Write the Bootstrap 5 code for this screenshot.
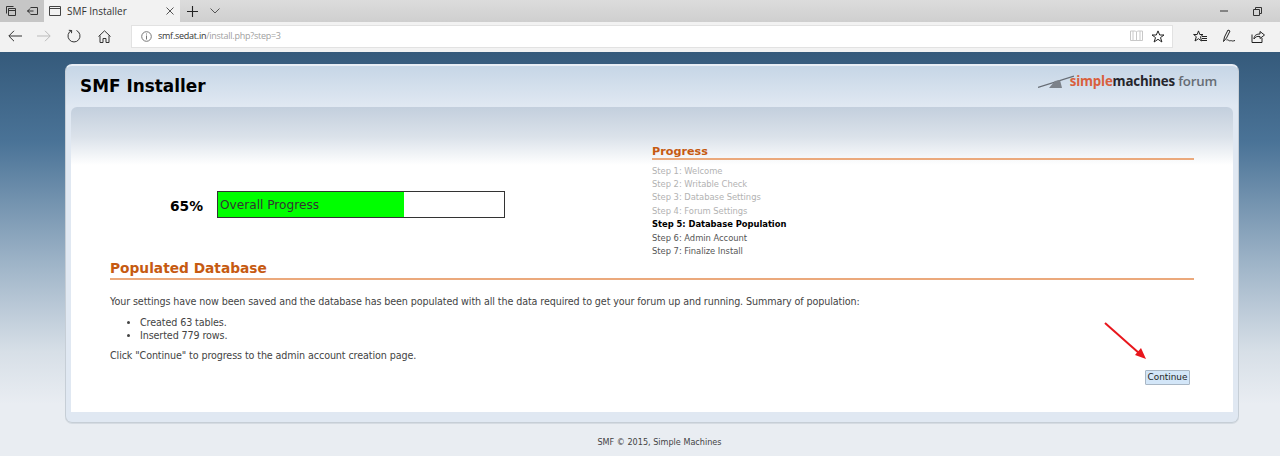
<!DOCTYPE html>
<html lang="en">
<head>
<meta charset="utf-8">
<title>SMF Installer</title>
<link rel="stylesheet" href="https://cdn.jsdelivr.net/npm/bootstrap@5.3.0/dist/css/bootstrap.min.css">
<style>
html,body{height:456px;overflow:hidden}
body{font-family:"DejaVu Sans",Verdana,sans-serif;font-size:9.6px;letter-spacing:-.11px;color:#444;background:#e9edf2}
.ui{font-family:"Open Sans","Noto Sans",sans-serif;letter-spacing:0}
.tabstrip{height:22px;background:linear-gradient(#dcdcdc,#cfcfcf)}
.tabtool{width:22px;height:22px;background:#c6c6c6}
.tabcur{width:136px;height:22px;background:#f2f2f2;font-size:10px;color:#333;padding:0 6px 0 5px;gap:6px}
.toolbar{height:30px;background:#f2f2f2;padding-left:0;padding-bottom:2px}
.toolbtn{width:29.5px;height:28px}
.addr{width:1042px;height:23px;margin-left:13px;background:#fff;border:1px solid #e2e2e2;font-size:9px;letter-spacing:-.25px;color:#333;padding:0 7px 0 9px}
.addr-info{margin-right:6px}
.addr em{font-style:normal;color:#a0a0a0}
.pagebg{height:404px;padding:12px 41px 0 65px;background:linear-gradient(#355a7b 0,#4a7397 90px,#9db3c7 210px,#d7dfe7 300px,#e9edf2 352px)}
.panel{height:359px;border:1px solid #c6ced6;border-top:2px solid #e8eef5;border-radius:7px;background:linear-gradient(#c6d6e6,#e0e8f2 40px,#e0e8f2);padding:0 5px 10px;box-shadow:0 1px 0 #d5dbe2}
.headrow{height:41px;padding:0 16px 0 9px}
.apptitle{font-size:16.9px;font-weight:700;color:#000;line-height:1;margin:0;letter-spacing:0}
.logotext{font-family:"Open Sans",sans-serif;font-size:13.3px;font-weight:700;line-height:1;letter-spacing:-.2px}
.logowrap{margin-top:-9px}
.logo-a{color:#d9603d}.logo-b{color:#26262c}.logo-c{color:#666c74;font-weight:600}
.innerbox{height:305px;border-radius:6px 6px 0 0;background:linear-gradient(#c3cfdd 0,#dbe2ea 30px,#fff 58px);padding:0 39px 0 39px}
.toparea{height:152px;padding-top:38px}
.leftbox{width:542px}
.pct{text-align:right;font-size:13.8px;font-weight:700;color:#000;letter-spacing:0}
.barbox{width:288px;height:27px;margin-left:14px;border:1px solid #333;background:#fff;position:relative}
.barfill{height:100%;background:#0f0}
.barlabel{position:absolute;left:2px;top:1px;line-height:25px;font-size:12.15px;color:#333;letter-spacing:0}
.sidebox{flex:1}
.sidehead{font-size:11.2px;font-weight:700;color:#c65a11;border-bottom:2px solid #eba97c;line-height:13px;margin:0 0 4.5px;letter-spacing:0}
.steps{margin:0;padding:0;list-style:none;font-size:8.4px;line-height:13.4px;letter-spacing:-.03px}
.stepdone{color:#b2b2b2}.stepnow{color:#000;font-weight:700}.steptodo{color:#555}
.sectionhead{font-size:13.75px;font-weight:700;color:#c65a11;border-bottom:2px solid #eba97c;line-height:18px;margin:0 0 15px;padding-bottom:1px;letter-spacing:0}
.para{margin:0 0 8px;line-height:13px}
.items{margin:0 0 7px;padding-left:30px;line-height:13px}
.actionrow{position:relative;margin-top:3px;height:24px}
.continuebtn{font-size:8.9px;letter-spacing:0;color:#222;background:#d3e6f8;border:1px solid #a9b7c5;border-radius:1px;padding:0;height:15px;line-height:13px;width:45px;margin-left:auto;margin-right:4px;display:block}
.arrow{position:absolute;left:994px;top:-48px}
.footline{font-size:8.1px;color:#444;text-align:center;padding:13px 0 0 15px;letter-spacing:0}
svg{display:block}
</style>
</head>
<body>
<div class="tabstrip d-flex ui">
  <div class="tabtool d-flex align-items-center justify-content-center"><svg width="12" height="12" viewBox="0 0 12 12" fill="none" stroke="#333"><path d="M1.5 8.5v-7h7M3.5 3.5h7v7h-7zM3.5 5.5h7" /></svg></div>
  <div class="tabtool d-flex align-items-center justify-content-center"><svg width="12" height="12" viewBox="0 0 12 12" fill="none" stroke="#333"><path d="M3.5 2.5h7v7h-7M0 6h6.5M3 3.5 .8 6 3 8.5"/></svg></div>
  <div class="tabcur d-flex align-items-center">
    <svg width="12" height="10" viewBox="0 0 12 10" fill="none" stroke="#444"><path d="M.5.5h11v9H.5zM.5 2.5h11"/></svg>
    <span class="flex-grow-1">SMF Installer</span>
    <svg width="8" height="8" viewBox="0 0 8 8" fill="none" stroke="#555"><path d="M.5.5l7 7M7.5.5l-7 7"/></svg>
  </div>
  <div class="d-flex align-items-center" style="gap:12px;padding-left:7px">
    <svg width="11" height="11" viewBox="0 0 11 11" fill="none" stroke="#222" stroke-width="1.1"><path d="M5.5 0v11M0 5.5h11"/></svg>
    <svg width="10" height="6" viewBox="0 0 10 6" fill="none" stroke="#555"><path d="M.5.5l4.5 4.5 4.5-4.5"/></svg>
  </div>
  <div class="ms-auto d-flex align-items-center" style="gap:25px;padding-right:18px">
    <svg width="8" height="2" viewBox="0 0 8 2"><path d="M0 1h8" stroke="#333"/></svg>
    <svg width="9" height="9" viewBox="0 0 9 9" fill="none" stroke="#333"><path d="M.5 2.5h6v6h-6zM2.5 2.5v-2h6v6h-2"/></svg>
  </div>
</div>
<div class="toolbar d-flex align-items-center ui">
  <div class="toolbtn d-flex align-items-center justify-content-center"><svg width="14" height="12" viewBox="0 0 14 12" fill="none" stroke="#333"><path d="M14 6H1M6 .8 .8 6 6 11.2"/></svg></div>
  <div class="toolbtn d-flex align-items-center justify-content-center"><svg width="14" height="12" viewBox="0 0 14 12" fill="none" stroke="#bbb"><path d="M0 6h13M8 .8 13.2 6 8 11.2"/></svg></div>
  <div class="toolbtn d-flex align-items-center justify-content-center"><svg width="14" height="14" viewBox="0 0 14 14" fill="none" stroke="#333"><path d="M4.5 1.5A6 6 0 1 0 9.5 1.5M1.8 1.3 4.7 1.5 4.5 4.2"/></svg></div>
  <div class="toolbtn d-flex align-items-center justify-content-center"><svg width="13" height="13" viewBox="0 0 13 13" fill="none" stroke="#333" style="margin-left:2px"><path d="M.5 6.5 6.5 .8l6 5.7M2 5.5v7h3V8.5h3v4h3v-7"/></svg></div>
  <div class="addr d-flex align-items-center">
    <svg width="11" height="11" viewBox="0 0 11 11" fill="none" stroke="#777" class="addr-info"><circle cx="5.5" cy="5.5" r="4.8"/><path d="M5.5 4.5v4M5.5 2.5v1"/></svg>
    <span class="flex-grow-1">smf.sedat.in<em>/install.php?step=3</em></span>
    <svg width="13" height="12" viewBox="0 0 13 12" fill="none" stroke="#c8c8c8" class="me-2"><path d="M.5 1h5l1 1 1-1h5v9.5h-12zM6.5 2v8.5M3 1v9.5M10 1v9.5"/></svg>
    <svg width="14" height="13" viewBox="0 0 14 13" fill="none" stroke="#222"><path d="M7 .9 8.7 5H13L9.5 7.6 10.9 12 7 9.3 3.1 12 4.5 7.6 1 5h4.3z"/></svg>
  </div>
  <div class="d-flex align-items-center" style="gap:15px;margin-left:20px">
    <svg width="14" height="13" viewBox="0 0 14 13" fill="none" stroke="#222"><path d="M5.5 .9 6.8 4.5H10L7.5 6.7 8.5 11 5.5 8.7 2 11 3.3 6.7 .6 4.5h3.6zM9 6.5h5M9 8.5h5M9 10.500h5"/></svg>
    <svg width="14" height="14" viewBox="0 0 14 14" fill="none" stroke="#222"><path d="M1.5 12.5 2.5 8 6 1l2 1-3.5 7zM4.5 11c1.500-1 2.500 1.500 4 .7.800-.4 1.200.3 2 .3s1.500-.2 2.500-.5"/></svg>
    <svg width="14" height="13" viewBox="0 0 14 13" fill="none" stroke="#222"><path d="M3 12.5h8V8M1 4.5v8h2M3 9c0-4 3-5 6-5V1.500L13.500 5 9 8.500V6.500C6 6 4 7 3 9z"/></svg>
  </div>
</div>
<div class="pagebg">
  <div class="panel">
    <div class="headrow d-flex align-items-center justify-content-between">
      <h1 class="apptitle">SMF Installer</h1>
      <div class="logowrap d-flex align-items-center">
        <svg width="36" height="14" viewBox="0 0 36 14" style="margin-right:-4px"><path d="M0 12.5 36 1" stroke="#666c74" stroke-width="1.3"/><path d="M17 6 11 13H24L22 5z" fill="#7c828a"/></svg>
        <div class="logotext"><span class="logo-a">simple</span><span class="logo-b">machines</span> <span class="logo-c">forum</span></div>
      </div>
    </div>
    <div class="innerbox">
      <div class="toparea d-flex">
        <div class="leftbox d-flex align-items-start">
          <div class="pct" style="margin-left:-39px;width:132px;margin-top:51px">65%</div>
          <div class="barbox" style="margin-top:46px"><div class="barfill" style="width:65%"></div><div class="barlabel">Overall Progress</div></div>
        </div>
        <div class="sidebox">
          <h2 class="sidehead">Progress</h2>
          <ul class="steps">
            <li class="stepdone">Step 1: Welcome</li>
            <li class="stepdone">Step 2: Writable Check</li>
            <li class="stepdone">Step 3: Database Settings</li>
            <li class="stepdone">Step 4: Forum Settings</li>
            <li class="stepnow">Step 5: Database Population</li>
            <li class="steptodo">Step 6: Admin Account</li>
            <li class="steptodo">Step 7: Finalize Install</li>
          </ul>
        </div>
      </div>
      <h2 class="sectionhead">Populated Database</h2>
      <p class="para">Your settings have now been saved and the database has been populated with all the data required to get your forum up and running. Summary of population:</p>
      <ul class="items">
        <li>Created 63 tables.</li>
        <li>Inserted 779 rows.</li>
      </ul>
      <p class="para">Click "Continue" to progress to the admin account creation page.</p>
      <div class="actionrow">
        <svg class="arrow" width="44" height="40" viewBox="0 0 44 40"><path d="M1 1 36 32" stroke="#e8161c" stroke-width="2"/><path d="M42 37 31 33 37 26z" fill="#e8161c"/></svg>
        <button type="button" class="continuebtn">Continue</button>
      </div>
    </div>
  </div>
  <div class="footline">SMF © 2015, Simple Machines</div>
</div>
</body>
</html>
